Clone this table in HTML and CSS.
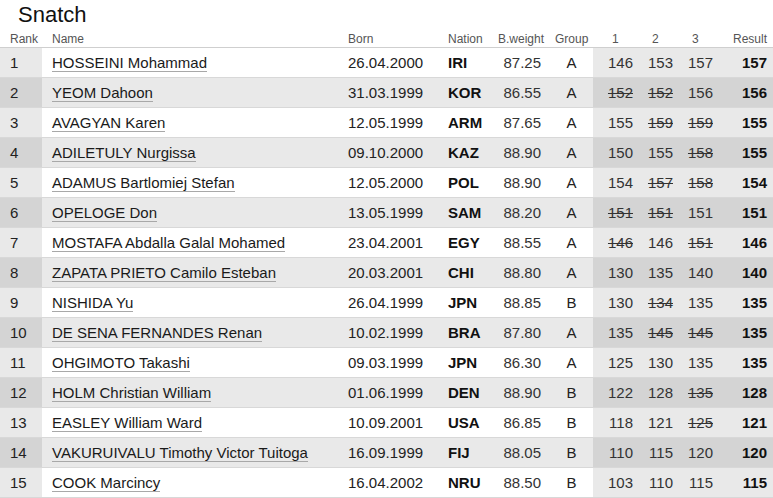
FILE: index.html
```html
<!DOCTYPE html>
<html>
<head>
<meta charset="utf-8">
<link rel="stylesheet" href="styles.css">
</head>
<body>
<h2 class="title">Snatch</h2>
<table class="res">
<colgroup>
<col class="c-rank"><col class="c-name"><col class="c-born"><col class="c-nat"><col class="c-bw"><col class="c-grp"><col class="c-a1"><col class="c-a"><col class="c-a"><col class="c-res">
</colgroup>
<thead>
<tr><th class="h-rank">Rank</th><th class="h-name">Name</th><th class="h-born">Born</th><th class="h-nat">Nation</th><th class="h-bw">B.weight</th><th class="h-grp">Group</th><th class="h-a1">1</th><th class="h-a2">2</th><th class="h-a3">3</th><th class="h-res">Result</th></tr>
</thead>
<tbody>
<tr><td class="rank">1</td><td class="name"><span class="lnk">HOSSEINI Mohammad</span></td><td class="born">26.04.2000</td><td class="nat">IRI</td><td class="bw">87.25</td><td class="grp">A</td><td class="att">146</td><td class="att">153</td><td class="att">157</td><td class="res-v">157</td></tr>
<tr><td class="rank">2</td><td class="name"><span class="lnk">YEOM Dahoon</span></td><td class="born">31.03.1999</td><td class="nat">KOR</td><td class="bw">86.55</td><td class="grp">A</td><td class="att"><s>152</s></td><td class="att"><s>152</s></td><td class="att">156</td><td class="res-v">156</td></tr>
<tr><td class="rank">3</td><td class="name"><span class="lnk">AVAGYAN Karen</span></td><td class="born">12.05.1999</td><td class="nat">ARM</td><td class="bw">87.65</td><td class="grp">A</td><td class="att">155</td><td class="att"><s>159</s></td><td class="att"><s>159</s></td><td class="res-v">155</td></tr>
<tr><td class="rank">4</td><td class="name"><span class="lnk">ADILETULY Nurgissa</span></td><td class="born">09.10.2000</td><td class="nat">KAZ</td><td class="bw">88.90</td><td class="grp">A</td><td class="att">150</td><td class="att">155</td><td class="att"><s>158</s></td><td class="res-v">155</td></tr>
<tr><td class="rank">5</td><td class="name"><span class="lnk">ADAMUS Bartlomiej Stefan</span></td><td class="born">12.05.2000</td><td class="nat">POL</td><td class="bw">88.90</td><td class="grp">A</td><td class="att">154</td><td class="att"><s>157</s></td><td class="att"><s>158</s></td><td class="res-v">154</td></tr>
<tr><td class="rank">6</td><td class="name"><span class="lnk">OPELOGE Don</span></td><td class="born">13.05.1999</td><td class="nat">SAM</td><td class="bw">88.20</td><td class="grp">A</td><td class="att"><s>151</s></td><td class="att"><s>151</s></td><td class="att">151</td><td class="res-v">151</td></tr>
<tr><td class="rank">7</td><td class="name"><span class="lnk">MOSTAFA Abdalla Galal Mohamed</span></td><td class="born">23.04.2001</td><td class="nat">EGY</td><td class="bw">88.55</td><td class="grp">A</td><td class="att"><s>146</s></td><td class="att">146</td><td class="att"><s>151</s></td><td class="res-v">146</td></tr>
<tr><td class="rank">8</td><td class="name"><span class="lnk">ZAPATA PRIETO Camilo Esteban</span></td><td class="born">20.03.2001</td><td class="nat">CHI</td><td class="bw">88.80</td><td class="grp">A</td><td class="att">130</td><td class="att">135</td><td class="att">140</td><td class="res-v">140</td></tr>
<tr><td class="rank">9</td><td class="name"><span class="lnk">NISHIDA Yu</span></td><td class="born">26.04.1999</td><td class="nat">JPN</td><td class="bw">88.85</td><td class="grp">B</td><td class="att">130</td><td class="att"><s>134</s></td><td class="att">135</td><td class="res-v">135</td></tr>
<tr><td class="rank">10</td><td class="name"><span class="lnk">DE SENA FERNANDES Renan</span></td><td class="born">10.02.1999</td><td class="nat">BRA</td><td class="bw">87.80</td><td class="grp">A</td><td class="att">135</td><td class="att"><s>145</s></td><td class="att"><s>145</s></td><td class="res-v">135</td></tr>
<tr><td class="rank">11</td><td class="name"><span class="lnk">OHGIMOTO Takashi</span></td><td class="born">09.03.1999</td><td class="nat">JPN</td><td class="bw">86.30</td><td class="grp">A</td><td class="att">125</td><td class="att">130</td><td class="att">135</td><td class="res-v">135</td></tr>
<tr><td class="rank">12</td><td class="name"><span class="lnk">HOLM Christian William</span></td><td class="born">01.06.1999</td><td class="nat">DEN</td><td class="bw">88.90</td><td class="grp">B</td><td class="att">122</td><td class="att">128</td><td class="att"><s>135</s></td><td class="res-v">128</td></tr>
<tr><td class="rank">13</td><td class="name"><span class="lnk">EASLEY William Ward</span></td><td class="born">10.09.2001</td><td class="nat">USA</td><td class="bw">86.85</td><td class="grp">B</td><td class="att">118</td><td class="att">121</td><td class="att"><s>125</s></td><td class="res-v">121</td></tr>
<tr><td class="rank">14</td><td class="name"><span class="lnk">VAKURUIVALU Timothy Victor Tuitoga</span></td><td class="born">16.09.1999</td><td class="nat">FIJ</td><td class="bw">88.05</td><td class="grp">B</td><td class="att">110</td><td class="att">115</td><td class="att">120</td><td class="res-v">120</td></tr>
<tr><td class="rank">15</td><td class="name"><span class="lnk">COOK Marcincy</span></td><td class="born">16.04.2002</td><td class="nat">NRU</td><td class="bw">88.50</td><td class="grp">B</td><td class="att">103</td><td class="att">110</td><td class="att">115</td><td class="res-v">115</td></tr>
</tbody>
</table>
</body>
</html>
```
FILE: styles.css
```css
html, body {
  margin: 0;
  padding: 0;
  background: #fff;
}
body {
  font-family: "Liberation Sans", Arial, sans-serif;
  color: #222;
  width: 773px;
  overflow: hidden;
}
.title {
  margin: 0;
  padding-left: 18px;
  font-size: 22px;
  font-weight: normal;
  line-height: 30px;
  height: 30px;
  color: #111;
}
.res {
  border-collapse: collapse;
  table-layout: fixed;
  width: 773px;
}
.c-rank { width: 42px; }
.c-name { width: 296px; }
.c-born { width: 102px; }
.c-nat { width: 50px; }
.c-bw { width: 60px; }
.c-grp { width: 43px; }
.c-a1 { width: 44px; }
.c-a { width: 40px; }
.c-res { width: 56px; }

th {
  font-size: 12px;
  font-weight: normal;
  color: #555;
  text-align: left;
  height: 17px;
  padding: 0;
  line-height: 14px;
  vertical-align: middle;
  border-bottom: 1px solid #cfcfcf;
  white-space: nowrap;
}
.h-rank { padding-left: 10px; }
.h-name { padding-left: 10px; }
.h-born { padding-left: 10px; }
.h-nat { padding-left: 8px; }
.h-bw { padding-left: 8px; }
.h-grp { padding-left: 5px; }
.h-a1 { padding-left: 19px; }
.h-a2 { padding-left: 15px; }
.h-a3 { padding-left: 15px; }
.h-res { padding-left: 16px; }

td {
  font-size: 15px;
  height: 29px;
  padding: 0;
  line-height: 17px;
  vertical-align: middle;
  border-bottom: 1px solid #d8d8d8;
  white-space: nowrap;
  overflow: hidden;
}
tbody tr:nth-child(even) td { background: #e9e9e9; }
.rank { padding-left: 10px; background: #e9e9e9; }
tbody tr:nth-child(even) td.rank { background: #d4d4d4; }
.name { padding-left: 10px; }
.lnk {
  border-bottom: 1px solid #a8a8a8;
  color: #1a1a1a;
}
.born { padding-left: 10px; color: #222; }
.nat { padding-left: 8px; font-weight: bold; color: #111; }
.bw { text-align: right; padding-right: 9px; color: #333; }
.grp { text-align: center; color: #222; }
.att { text-align: right; padding-right: 4px; color: #333; background: #e9e9e9; }
.res-v { text-align: right; padding-right: 6px; font-weight: bold; color: #111; background: #e9e9e9; }
tbody tr:nth-child(even) td.att,
tbody tr:nth-child(even) td.res-v { background: #d4d4d4; }
s { text-decoration: line-through; }
```
